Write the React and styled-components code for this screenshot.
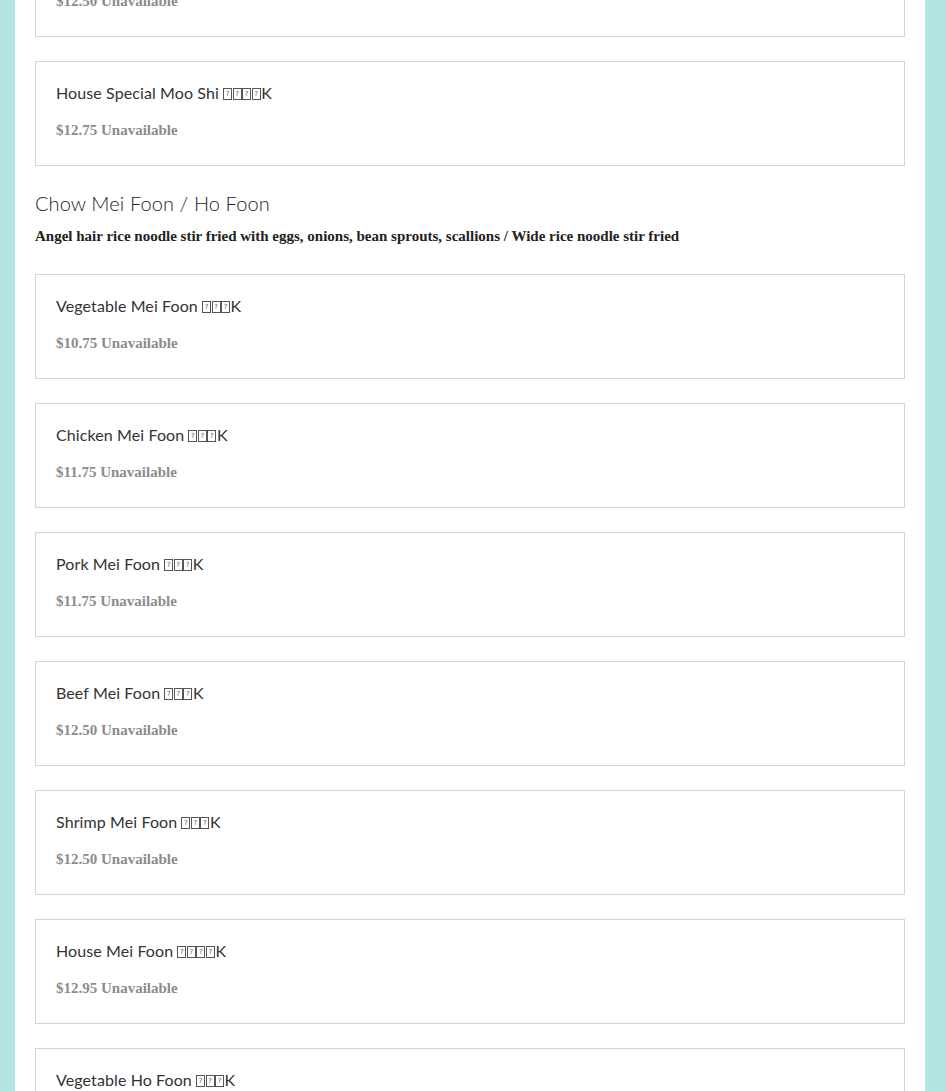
import React from "react";
import styled, { createGlobalStyle } from "styled-components";

const Global = createGlobalStyle`
  html, body {
    margin: 0;
    padding: 0;
    background: #b3e5e2;
    overflow: hidden;
  }
`;

const Panel = styled.div`
  width: 870px;
  margin: -68px 0 0 15px;
  padding: 0 20px 40px;
  background: #fff;
`;

const Card = styled.div`
  border: 1px solid #d4d4d4;
  padding: 20px 20px 25px;
  margin-bottom: 24px;
`;

const Title = styled.div`
  height: 22px;
  font-family: Lato, "Open Sans", sans-serif;
  font-size: 16px;
  line-height: 22px;
  color: #333;
  letter-spacing: 0.1px;
`;

// missing-glyph box, as the browser draws it for the Chinese name
const Tofu = styled.span`
  display: inline-block;
  box-sizing: border-box;
  width: 9px;
  height: 12px;
  margin-right: 0.5px;
  overflow: hidden;
  border: 1px solid #555;
  font-family: "DejaVu Sans", sans-serif;
  font-size: 7px;
  line-height: 10px;
  text-align: center;
  vertical-align: -1px;
  color: #555;
`;

const Price = styled.div`
  margin-top: 16px;
  font-family: "Liberation Serif", serif;
  font-weight: bold;
  font-size: 15px;
  line-height: 20px;
  color: #8c8c8c;
`;

const Section = styled.div`
  margin-bottom: 28px;
`;

const Heading = styled.h2`
  margin: 0;
  font-family: Lato, "Open Sans", sans-serif;
  font-weight: 300;
  font-size: 20px;
  line-height: 26px;
  color: #222;
  letter-spacing: 0.1px;
`;

const Desc = styled.p`
  margin: 10px 0 0;
  font-family: "Liberation Serif", serif;
  font-weight: bold;
  font-size: 15px;
  line-height: 20px;
  color: #222;
`;

function Item({ name, boxes, price }) {
  return (
    <Card>
      <Title>
        {name}{" "}
        {Array.from({ length: boxes }).map((_, i) => (
          <Tofu key={i}>?</Tofu>
        ))}
        K
      </Title>
      <Price>{price} Unavailable</Price>
    </Card>
  );
}

const before = [
  { name: "Shrimp Moo Shi", boxes: 3, price: "$12.50" },
  { name: "House Special Moo Shi", boxes: 4, price: "$12.75" },
];

const meiFoon = [
  { name: "Vegetable Mei Foon", boxes: 3, price: "$10.75" },
  { name: "Chicken Mei Foon", boxes: 3, price: "$11.75" },
  { name: "Pork Mei Foon", boxes: 3, price: "$11.75" },
  { name: "Beef Mei Foon", boxes: 3, price: "$12.50" },
  { name: "Shrimp Mei Foon", boxes: 3, price: "$12.50" },
  { name: "House Mei Foon", boxes: 4, price: "$12.95" },
  { name: "Vegetable Ho Foon", boxes: 3, price: "$11.75" },
];

export default function App() {
  return (
    <>
      <Global />
      <Panel>
        {before.map((it) => <Item key={it.name} {...it} />)}
        <Section>
          <Heading>Chow Mei Foon / Ho Foon</Heading>
          <Desc>Angel hair rice noodle stir fried with eggs, onions, bean sprouts, scallions / Wide rice noodle stir fried</Desc>
        </Section>
        {meiFoon.map((it) => <Item key={it.name} {...it} />)}
      </Panel>
    </>
  );
}
